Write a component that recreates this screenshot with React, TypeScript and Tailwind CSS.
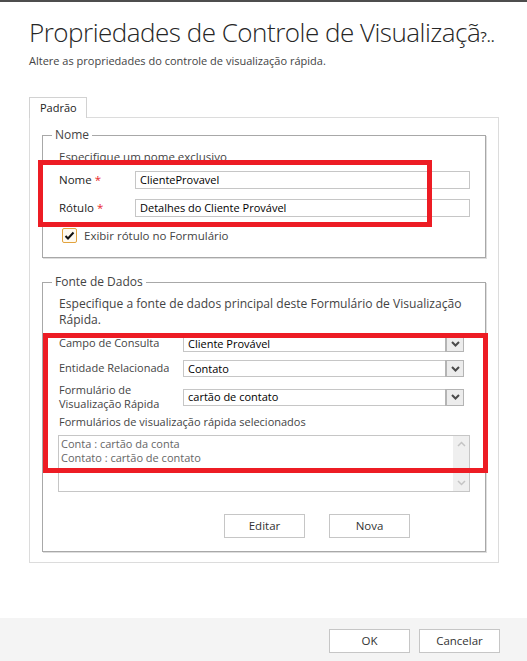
import React from "react";

const Chevron = ({ up = false, color = "#4a4a4a", w = 2 }: { up?: boolean; color?: string; w?: number }) => (
  <svg width="9" height="6" viewBox="0 0 9 6" className="block">
    <path
      d={up ? "M1 5 L4.5 1.5 L8 5" : "M1 1 L4.5 4.5 L8 1"}
      fill="none"
      stroke={color}
      strokeWidth={w}
    />
  </svg>
);

const Select = ({ value }: { value: string }) => (
  <div className="flex h-[17px] w-[281px] items-stretch border border-[#c6c6c6] bg-white">
    <div className="flex flex-1 items-center pl-[4px] text-[11px] leading-[14px] text-black">{value}</div>
    <div className="flex w-[17px] items-center justify-center border-l border-[#b4b4b4] bg-[#ececec] outline outline-1 outline-[#b4b4b4]">
      <Chevron />
    </div>
  </div>
);

const Btn = ({ label }: { label: string }) => (
  <div className="flex h-[24px] w-[81px] items-center justify-center border border-[#c6c6c6] bg-white text-[11.5px] text-[#333]">
    {label}
  </div>
);

export default function App() {
  return (
    <div
      className="relative flex h-[661px] w-[527px] flex-col overflow-hidden bg-white"
      style={{ fontFamily: '"Open Sans", "Noto Sans", sans-serif' }}
    >
      <div className="h-[2px] bg-[#4d4d4d]" />
      <div className="flex flex-col pl-[29px]">
        <h1 className="mt-[10px] h-[40px] whitespace-nowrap text-[26px] font-light leading-[40px] tracking-[-0.5px] text-[#262626]">
          Propriedades de Controle de Visualizaçã<span className="text-[15px] font-normal tracking-normal">?..</span>
        </h1>
        <p className="mt-[1px] h-[16px] text-[11px] leading-[16px] text-[#444]">
          Altere as propriedades do controle de visualização rápida.
        </p>

        {/* Tab */}
        <div className="relative z-10 mt-[28px] -mb-px flex h-[21px] w-[58px] items-center border border-b-0 border-[#d2d2d2] bg-white pl-[10px] text-[11px] text-[#222]">
          Padrão
        </div>

        {/* Panel */}
        <div className="flex h-[446px] w-[470px] flex-col border border-[#dcdcdc] px-[12px] pt-[9px]">
          <fieldset className="border border-[#a8a8a8] shadow-[1px_1px_0_#dedede]">
            <legend className="ml-[9px] px-[3px] text-[12px] leading-[16px] text-[#444]">Nome</legend>
            <div className="pr-[15px] pl-[16px] pb-[14px]">
              <div className="mt-[6px] h-[16px] text-[11.5px] leading-[16px] text-[#444]">Especifique um nome exclusivo</div>
              <div className="mt-[6px] flex h-[18px] items-center">
                <div className="w-[76px] text-[11.5px] text-[#222]">
                  Nome <span className="text-[#e8262c]">*</span>
                </div>
                <div className="flex h-[18px] flex-1 items-center border border-[#c6c6c6] pl-[4px] text-[11px] text-black">
                  ClienteProvavel
                </div>
              </div>
              <div className="mt-[10px] flex h-[18px] items-center">
                <div className="w-[76px] text-[11.5px] text-[#222]">
                  Rótulo <span className="text-[#e8262c]">*</span>
                </div>
                <div className="flex h-[18px] flex-1 items-center border border-[#c6c6c6] pl-[4px] text-[11px] text-black">
                  Detalhes do Cliente Provável
                </div>
              </div>
              <div className="mt-[11px] flex h-[15px] items-center pl-[3px]">
                <div className="flex h-[15px] w-[15px] items-center justify-center rounded-[2px] border border-[#e2a33e] bg-[#fffaf0]">
                  <svg width="11" height="10" viewBox="0 0 11 10">
                    <path d="M1.5 5 L4 7.5 L9.5 1.5" fill="none" stroke="#111" strokeWidth="2" />
                  </svg>
                </div>
                <span className="ml-[7px] text-[11.5px] text-[#444]">Exibir rótulo no Formulário</span>
              </div>
            </div>
          </fieldset>

          <fieldset className="mt-[16px] border border-[#a8a8a8] shadow-[1px_1px_0_#dedede]">
            <legend className="ml-[9px] px-[3px] text-[12px] leading-[16px] text-[#444]">Fonte de Dados</legend>
            <div className="pr-[15px] pl-[16px] pb-[13px]">
              <div className="mt-[6px] text-[12.1px] leading-[16px] text-[#444]">
                Especifique a fonte de dados principal deste Formulário de Visualização Rápida.
              </div>
              <div className="mt-[7px] flex h-[17px] items-center">
                <div className="w-[124px] text-[11px] text-[#444]">Campo de Consulta</div>
                <Select value="Cliente Provável" />
              </div>
              <div className="mt-[8px] flex h-[17px] items-center">
                <div className="w-[124px] text-[11px] text-[#444]">Entidade Relacionada</div>
                <Select value="Contato" />
              </div>
              <div className="mt-[6px] flex h-[28px] items-center">
                <div className="w-[124px] text-[11px] leading-[14px] text-[#444]">
                  Formulário de
                  <br />
                  Visualização Rápida
                </div>
                <Select value="cartão de contato" />
              </div>
              <div className="mt-[3px] h-[16px] text-[11px] leading-[16px] text-[#444]">
                Formulários de visualização rápida selecionados
              </div>
              <div className="mt-[5px] -ml-px flex h-[57px] border border-[#c6c6c6]">
                <div className="flex-1 pt-[1px] pl-[2px] text-[11px] leading-[14px] text-[#666]">
                  <div>Conta : cartão da conta</div>
                  <div>Contato : cartão de contato</div>
                </div>
                <div className="flex w-[16px] flex-col items-center justify-between bg-[#efefef] py-[5px]">
                  <Chevron up color="#c4c4c4" w={1.5} />
                  <Chevron color="#c4c4c4" w={1.5} />
                </div>
              </div>
              <div className="mt-[22px] flex gap-[24px] pl-[165px]">
                <Btn label="Editar" />
                <Btn label="Nova" />
              </div>
            </div>
          </fieldset>
        </div>
      </div>

      <div className="flex-1" />

      <div className="flex h-[43px] justify-end gap-[9px] bg-[#f4f4f4] pt-[11px] pr-[27px]">
        <Btn label="OK" />
        <Btn label="Cancelar" />
      </div>

      {/* red annotation boxes */}
      <div className="pointer-events-none absolute left-[38px] top-[160px] h-[67px] w-[394px] border-[5px] border-[#ed1c24]" />
      <div className="pointer-events-none absolute left-[43px] top-[333px] h-[140px] w-[445px] border-[5px] border-[#ed1c24]" />
    </div>
  );
}
